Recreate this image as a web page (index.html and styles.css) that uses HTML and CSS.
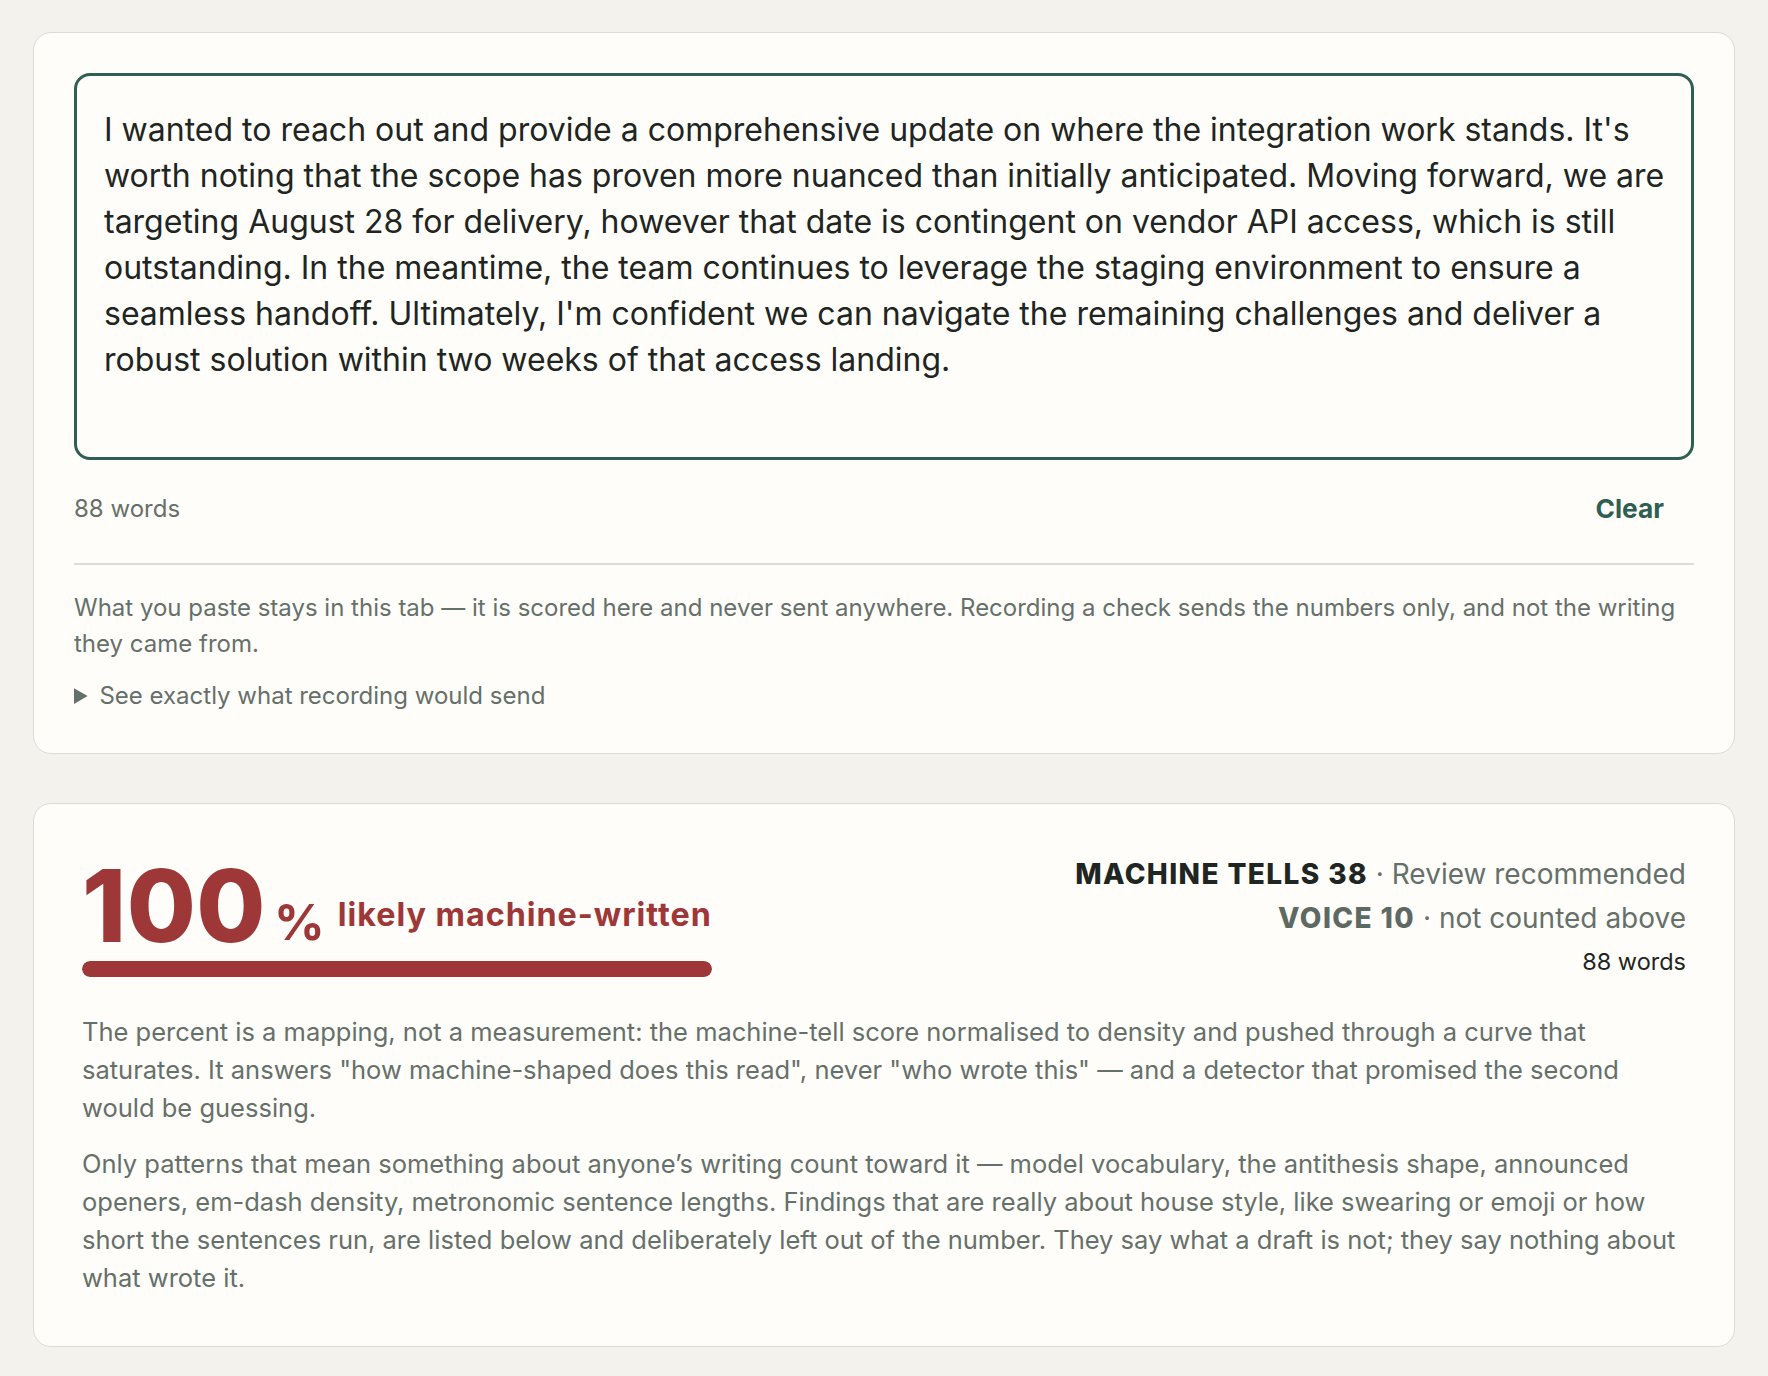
FILE: index.html
```html
<!DOCTYPE html>
<html lang="en">
<head>
<meta charset="utf-8">
<title>Machine tells</title>
<link rel="stylesheet" href="styles.css">
</head>
<body>
<main class="page">
  <section class="card input-card">
    <div class="editor" role="textbox" aria-multiline="true">I wanted to reach out and provide a comprehensive update on where the integration work stands. It's worth noting that the scope has proven more nuanced than initially anticipated. Moving forward, we are targeting August 28 for delivery, however that date is contingent on vendor API access, which is still outstanding. In the meantime, the team continues to leverage the staging environment to ensure a seamless handoff. Ultimately, I'm confident we can navigate the remaining challenges and deliver a robust solution within two weeks of that access landing.</div>
    <div class="meta-row">
      <span class="word-count">88 words</span>
      <button class="clear-btn" type="button">Clear</button>
    </div>
    <div class="privacy">
      <p class="privacy-text">What you paste stays in this tab — it is scored here and never sent anywhere. Recording a check sends the numbers only, and not the writing they came from.</p>
      <details class="send-details">
        <summary>See exactly what recording would send</summary>
      </details>
    </div>
  </section>

  <section class="card result-card">
    <div class="result-head">
      <div class="score">
        <div class="score-line"><span class="score-num">100</span><span class="score-pct">%</span><span class="score-label">likely machine-written</span></div>
        <div class="score-bar"><div class="score-fill" style="width:100%"></div></div>
      </div>
      <div class="tallies">
        <div class="tally"><strong class="tally-key">MACHINE TELLS 38</strong> · Review recommended</div>
        <div class="tally"><strong class="tally-key tally-voice">VOICE 10</strong> · not counted above</div>
        <div class="tally-words">88 words</div>
      </div>
    </div>
    <p class="explain">The percent is a mapping, not a measurement: the machine-tell score normalised to density and pushed through a curve that saturates. It answers "how machine-shaped does this read", never "who wrote this" — and a detector that promised the second would be guessing.</p>
    <p class="explain">Only patterns that mean something about anyone’s writing count toward it — model vocabulary, the antithesis shape, announced openers, em-dash density, metronomic sentence lengths. Findings that are really about house style, like swearing or emoji or how short the sentences run, are listed below and deliberately left out of the number. They say what a draft is not; they say nothing about what wrote it.</p>
  </section>
</main>
</body>
</html>
```

FILE: styles.css
```css
* { box-sizing: border-box; }

html, body {
  margin: 0;
  padding: 0;
}

body {
  background: #f4f2ed;
  font-family: Inter, "Noto Sans", "Liberation Sans", sans-serif;
  color: #1e2522;
}

.page {
  padding: 32px 33px;
  display: flex;
  flex-direction: column;
  gap: 49px;
}

.card {
  background: #fefdf9;
  border: 1.5px solid #dcdad3;
  border-radius: 18px;
}

.input-card {
  padding: 40px 40px 39px;
}

.editor {
  height: 387px;
  border: 3px solid #2e5f52;
  border-radius: 16px;
  padding: 31px 4px 31px 27px;
  font-size: 32px;
  line-height: 46px;
  color: #1e2522;
  background: #fefdf9;
}

.meta-row {
  display: flex;
  justify-content: space-between;
  align-items: center;
  height: 44px;
  margin-top: 26px;
}

.word-count {
  font-size: 24px;
  color: #66706b;
}

.clear-btn {
  font-family: inherit;
  font-size: 26.3px;
  font-weight: 700;
  color: #2e5f52;
  background: none;
  border: 0;
  padding: 6px 30px 6px 12px;
  cursor: pointer;
}

.privacy {
  margin-top: 33px;
  border-top: 2px solid #dedcd7;
  padding-top: 25px;
}

.privacy-text {
  margin: 0;
  font-size: 24px;
  line-height: 36px;
  color: #66706b;
}

.send-details {
  margin-top: 16px;
  font-size: 24px;
  line-height: 36px;
  color: #66706b;
}

.send-details summary {
  cursor: pointer;
}

.result-card {
  padding: 48px 48px 49px;
}

.result-head {
  display: flex;
  justify-content: space-between;
  align-items: flex-start;
}

.score {
  margin-top: 4px;
  color: #9e3838;
}

.score-line {
  font-size: 100px;
  line-height: 100px;
  white-space: nowrap;
  font-weight: 800;
}

.score-num {
  letter-spacing: 0.005em;
}

.score-pct {
  font-size: 50px;
  font-weight: 700;
  line-height: 1;
  margin-left: 8px;
  vertical-align: 2px;
}

.score-label {
  font-size: 32.3px;
  font-weight: 700;
  line-height: 1;
  letter-spacing: 0.03em;
  margin-left: 13px;
  vertical-align: 16px;
}

.score-bar {
  margin-top: 5px;
  height: 16px;
  border-radius: 8px;
  background: #ece6de;
  overflow: hidden;
}

.score-fill {
  height: 100%;
  background: #9e3838;
  border-radius: 8px;
}

.tallies {
  text-align: right;
  font-size: 28px;
  line-height: 44px;
  color: #66706b;
}

.tally-key {
  font-weight: 800;
  letter-spacing: 0.05em;
  color: #1e2522;
}

.tally-voice {
  color: #5f6964;
}

.tally-words {
  font-size: 23.5px;
  color: #1e2522;
}

.explain {
  margin: 29px -4px 0 0;
  font-size: 25.5px;
  line-height: 38px;
  color: #66706b;
}

.explain + .explain {
  margin-top: 18px;
}
```
